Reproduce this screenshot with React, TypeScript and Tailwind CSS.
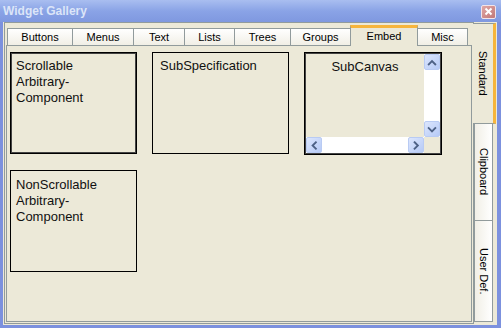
import { ReactNode } from 'react'

const tabs = [
    { label: 'Buttons', w: 66 },
    { label: 'Menus', w: 62 },
    { label: 'Text', w: 52 },
    { label: 'Lists', w: 51 },
    { label: 'Trees', w: 57 },
    { label: 'Groups', w: 61 },
    { label: 'Embed', w: 68, active: true },
    { label: 'Misc', w: 51 }
]

function Chevron({ dir }: { dir: 'up' | 'down' | 'left' | 'right' }) {
    const d = {
        up: 'M4 9.5 L7.5 6 L11 9.5',
        down: 'M4 6 L7.5 9.5 L11 6',
        left: 'M9.5 4 L6 7.5 L9.5 11',
        right: 'M6 4 L9.5 7.5 L6 11'
    }[dir]
    return (
        <svg width="15" height="15" viewBox="0 0 15 15">
            <path d={d} fill="none" stroke="#4D6185" strokeWidth="2" strokeLinecap="square" />
        </svg>
    )
}

function ScrollBtn({ dir }: { dir: 'up' | 'down' | 'left' | 'right' }) {
    return (
        <div className="w-[16px] h-[16px] shrink-0 flex items-center justify-center rounded-[2px] border border-[#B9CBF3] bg-gradient-to-br from-[#DCE6FD] to-[#B6CAF6]">
            <Chevron dir={dir} />
        </div>
    )
}

function Card({ children, className }: { children: ReactNode; className: string }) {
    return <div className={`border-black text-[13px] leading-[16px] text-[#111] ${className}`}>{children}</div>
}

export default function App() {
    return (
        <div className="w-[501px] h-[328px] flex flex-col bg-[#7C91DE] font-['Liberation_Sans',sans-serif] overflow-hidden">
            {/* title bar */}
            <div className="h-[22px] shrink-0 flex items-center justify-between pl-[3px] pr-[5px] bg-gradient-to-b from-[#A9BEF0] via-[#8AA3E6] to-[#7F98E0]">
                <span className="text-[12px] font-bold text-[#DCE5F8]">Widget Gallery</span>
                <div className="w-[15px] h-[14px] mt-[1px] rounded-[2px] border border-[#F1E4EA] bg-gradient-to-br from-[#DFA7A5] to-[#C17878] flex items-center justify-center">
                    <svg width="9" height="9" viewBox="0 0 9 9">
                        <path d="M1.5 1.5 L7.5 7.5 M7.5 1.5 L1.5 7.5" stroke="#fff" strokeWidth="2" />
                    </svg>
                </div>
            </div>

            {/* client area */}
            <div className="ml-[3px] mr-[4px] h-[303px] shrink-0 bg-[#ECE9D8] flex items-start pl-[1px]">
                {/* outer pane */}
                <div className="w-[470px] h-[302px] border border-[#919B9C] px-[1px] pt-[2px] pb-[1px] flex flex-col">
                    {/* inner tab row */}
                    <div className="h-[20px] flex items-end pl-[1px] shrink-0">
                        {tabs.map((t, i) =>
                            t.active ? (
                                <div
                                    key={t.label}
                                    style={{ width: t.w }}
                                    className="-ml-px relative z-10 h-[21px] -mb-px bg-[#ECE9D8] border-x border-[#919B9C] border-t-[3px] border-t-[#F7B53C] flex items-center justify-center text-[11px] text-black pb-[2px]"
                                >
                                    {t.label}
                                </div>
                            ) : (
                                <div
                                    key={t.label}
                                    style={{ width: t.w }}
                                    className={`${i === 0 ? '' : '-ml-px'} h-[17px] bg-gradient-to-b from-[#FFFFFF] to-[#F1EFE6] border-t border-x border-[#919B9C] flex items-center justify-center text-[11px] text-black`}
                                >
                                    {t.label}
                                </div>
                            )
                        )}
                    </div>
                    {/* inner content */}
                    <div className="flex-1 border border-[#919B9C] bg-[#ECE9D8] pl-[3px] pt-[6px]">
                        <div className="flex gap-[15px]">
                            <Card className="w-[127px] h-[102px] border shadow-[inset_0_0_0_1px_#444] px-[5px] pt-[5px]">
                                Scrollable
                                <br />
                                Arbitrary-
                                <br />
                                Component
                            </Card>
                            <Card className="w-[137px] h-[102px] border px-[7px] pt-[5px]">SubSpecification</Card>
                            <div className="w-[138px] h-[103px] border border-black flex flex-col p-px shadow-[inset_0_0_0_1px_#444]">
                                <div className="flex flex-1">
                                    <div className="flex-1 text-center text-[13px] leading-[16px] text-[#111] pt-[5px]">SubCanvas</div>
                                    <div className="w-[16px] flex flex-col bg-white">
                                        <ScrollBtn dir="up" />
                                        <div className="flex-1" />
                                        <ScrollBtn dir="down" />
                                    </div>
                                </div>
                                <div className="h-[16px] flex">
                                    <div className="flex-1 flex bg-white">
                                        <ScrollBtn dir="left" />
                                        <div className="flex-1" />
                                        <ScrollBtn dir="right" />
                                    </div>
                                    <div className="w-[16px] bg-[#ECE9D8]" />
                                </div>
                            </div>
                        </div>
                        <div className="flex mt-[15px]">
                            <Card className="w-[127px] h-[102px] border px-[5px] pt-[6px]">
                                NonScrollable
                                <br />
                                Arbitrary-
                                <br />
                                Component
                            </Card>
                        </div>
                    </div>
                </div>

                {/* right side tabs */}
                <div className="flex flex-col pt-[1px]">
                    <div className="-ml-px relative z-10 w-[23px] h-[101px] bg-[#ECE9D8] border-y border-[#919B9C] border-r-[3px] border-r-[#F7B53C] flex items-center justify-center">
                        <span className="[writing-mode:vertical-rl] text-[11px] text-black">Standard</span>
                    </div>
                    <div className="w-[19px] h-[97px] bg-gradient-to-l from-[#FFFFFF] to-[#F1EFE6] border-x border-b border-[#919B9C] flex items-center justify-center">
                        <span className="[writing-mode:vertical-rl] text-[11px] text-black">Clipboard</span>
                    </div>
                    <div className="w-[19px] h-[101px] bg-gradient-to-l from-[#FFFFFF] to-[#F1EFE6] border-x border-b border-[#919B9C] flex items-center justify-center">
                        <span className="[writing-mode:vertical-rl] text-[11px] text-black">User Def.</span>
                    </div>
                </div>
            </div>
        </div>
    )
}
